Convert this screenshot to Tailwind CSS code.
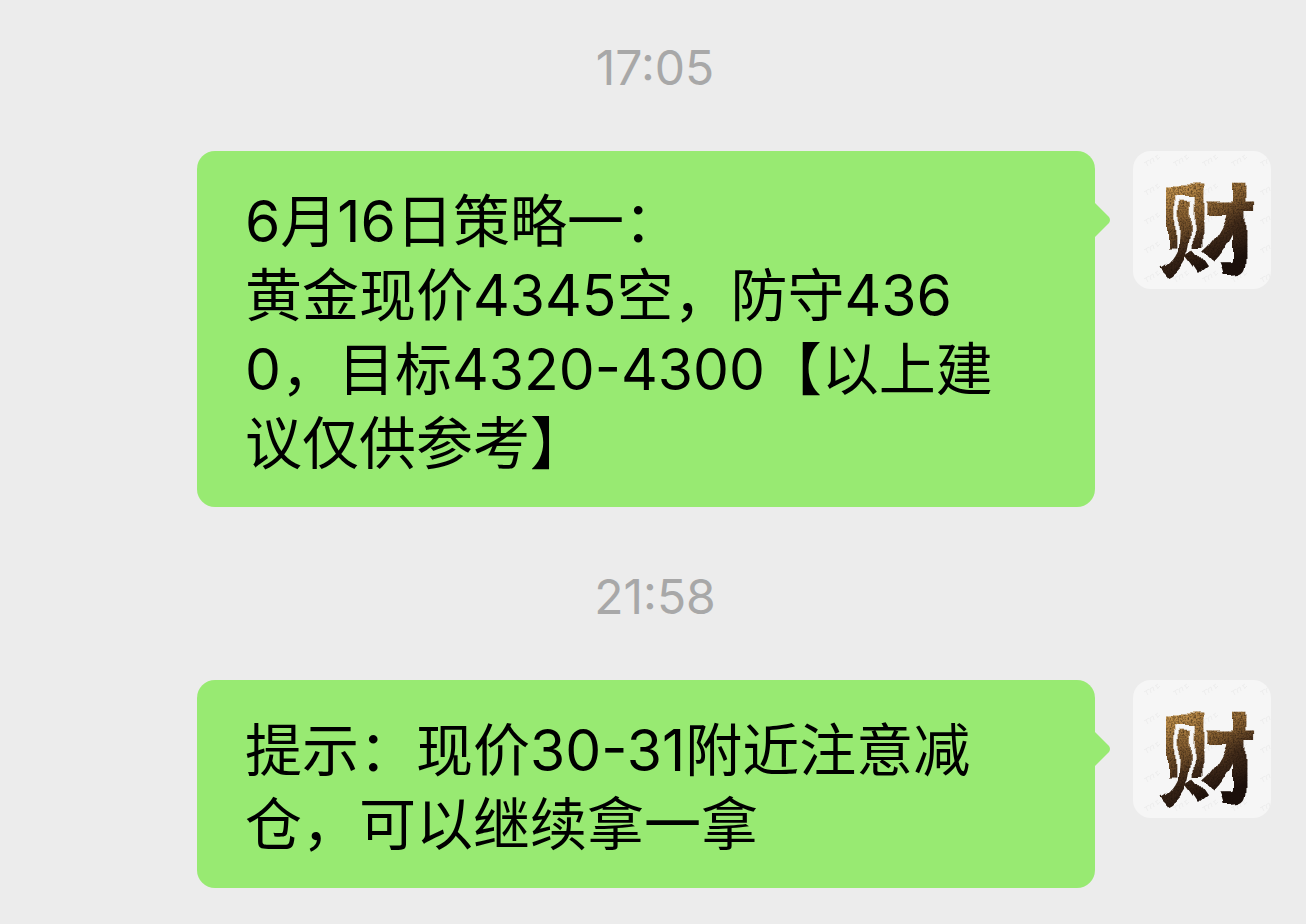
<!DOCTYPE html>
<html lang="zh-CN">
<head>
  <meta charset="UTF-8" />
  <meta name="viewport" content="width=device-width, initial-scale=1.0" />
  <title>聊天记录</title>
  <script src="https://cdn.jsdelivr.net/npm/@tailwindcss/browser@4"></script>
</head>
<body class="min-h-screen bg-[#ececec] font-['Inter','Noto_Sans_CJK_SC',sans-serif] text-black">

  <!-- shared avatar artwork -->
  <svg class="absolute w-0 h-0" aria-hidden="true">
    <defs>
      <linearGradient id="gold" x1="0" y1="0" x2="0.35" y2="1">
        <stop offset="0.15" stop-color="#c8974f" />
        <stop offset="0.42" stop-color="#8a6232" />
        <stop offset="0.65" stop-color="#422b1a" />
        <stop offset="0.9" stop-color="#1c100c" />
      </linearGradient>
      <!-- uneven brush edge, then dark specks inside the ink -->
      <filter id="ink" x="-10%" y="-10%" width="120%" height="120%" color-interpolation-filters="sRGB">
        <feTurbulence type="fractalNoise" baseFrequency="0.04" numOctaves="1" seed="8" result="wave" />
        <feDisplacementMap in="SourceGraphic" in2="wave" scale="14" xChannelSelector="R" yChannelSelector="G" result="brush" />
        <feTurbulence type="fractalNoise" baseFrequency="0.6" numOctaves="2" seed="4" result="noise" />
        <feColorMatrix in="noise" type="matrix" values="0 0 0 0 0.1  0 0 0 0 0.06  0 0 0 0 0.03  1.3 0 0 0 -0.5" result="specks" />
        <feComposite in="specks" in2="brush" operator="in" result="inside" />
        <feMerge>
          <feMergeNode in="brush" />
          <feMergeNode in="inside" />
        </feMerge>
      </filter>
      <pattern id="marks" width="29" height="29" patternUnits="userSpaceOnUse" patternTransform="translate(2 -1)">
        <path d="M9 13l5-3M11 12l2 4M15 10l1 4M15 10l3-2 1 4M20 7l3-2M21 6l2 4M23 9l2-2" fill="none" stroke="#ededed" stroke-width="1" />
      </pattern>
      <symbol id="avatar" viewBox="0 0 138 138">
        <rect width="138" height="138" fill="#f6f6f6" />
        <rect width="138" height="138" fill="url(#marks)" />
        <text x="76" y="116" text-anchor="middle" font-size="100" font-weight="700" fill="url(#gold)" filter="url(#ink)">财</text>
      </symbol>
    </defs>
  </svg>

  <main class="pt-10 pb-9">
    <section>
      <time class="block pl-1 text-center text-[48px] leading-14 text-[#a8a8a8]">17:05</time>
      <div class="mt-[55px] pl-[197px] pr-[35px] flex items-start gap-[38px]">
        <div class="relative flex-1 min-w-0 rounded-[18px] bg-[#98ea72] pl-12 pr-[60px] pt-[34px] pb-[26px]">
          <p class="text-[57px] leading-[74px] font-normal break-all [text-spacing-trim:space-all]">6月16日策略一：<br>黄金现价4345空，防守4360，目标4320-4300【以上建议仅供参考】</p>
          <svg class="absolute left-full top-[52px] w-4 h-[34px]" viewBox="0 0 16 34" aria-hidden="true"><path d="M0 0l14 14q2 3 0 6L0 34z" fill="#98ea72" /></svg>
        </div>
        <svg class="size-[138px] shrink-0 rounded-[18px]" role="img" aria-label="头像"><use href="#avatar" /></svg>
      </div>
    </section>

    <section class="mt-[62px]">
      <time class="block pl-1 text-center text-[48px] leading-14 text-[#a8a8a8]">21:58</time>
      <div class="mt-[55px] pl-[197px] pr-[35px] flex items-start gap-[38px]">
        <div class="relative flex-1 min-w-0 rounded-[18px] bg-[#98ea72] pl-12 pr-[60px] pt-[34px] pb-[26px]">
          <p class="text-[57px] leading-[74px] font-normal break-all [text-spacing-trim:space-all]">提示：现价30-31附近注意减仓，可以继续拿一拿</p>
          <svg class="absolute left-full top-[52px] w-4 h-[34px]" viewBox="0 0 16 34" aria-hidden="true"><path d="M0 0l14 14q2 3 0 6L0 34z" fill="#98ea72" /></svg>
        </div>
        <svg class="size-[138px] shrink-0 rounded-[18px]" role="img" aria-label="头像"><use href="#avatar" /></svg>
      </div>
    </section>
  </main>
</body>
</html>
